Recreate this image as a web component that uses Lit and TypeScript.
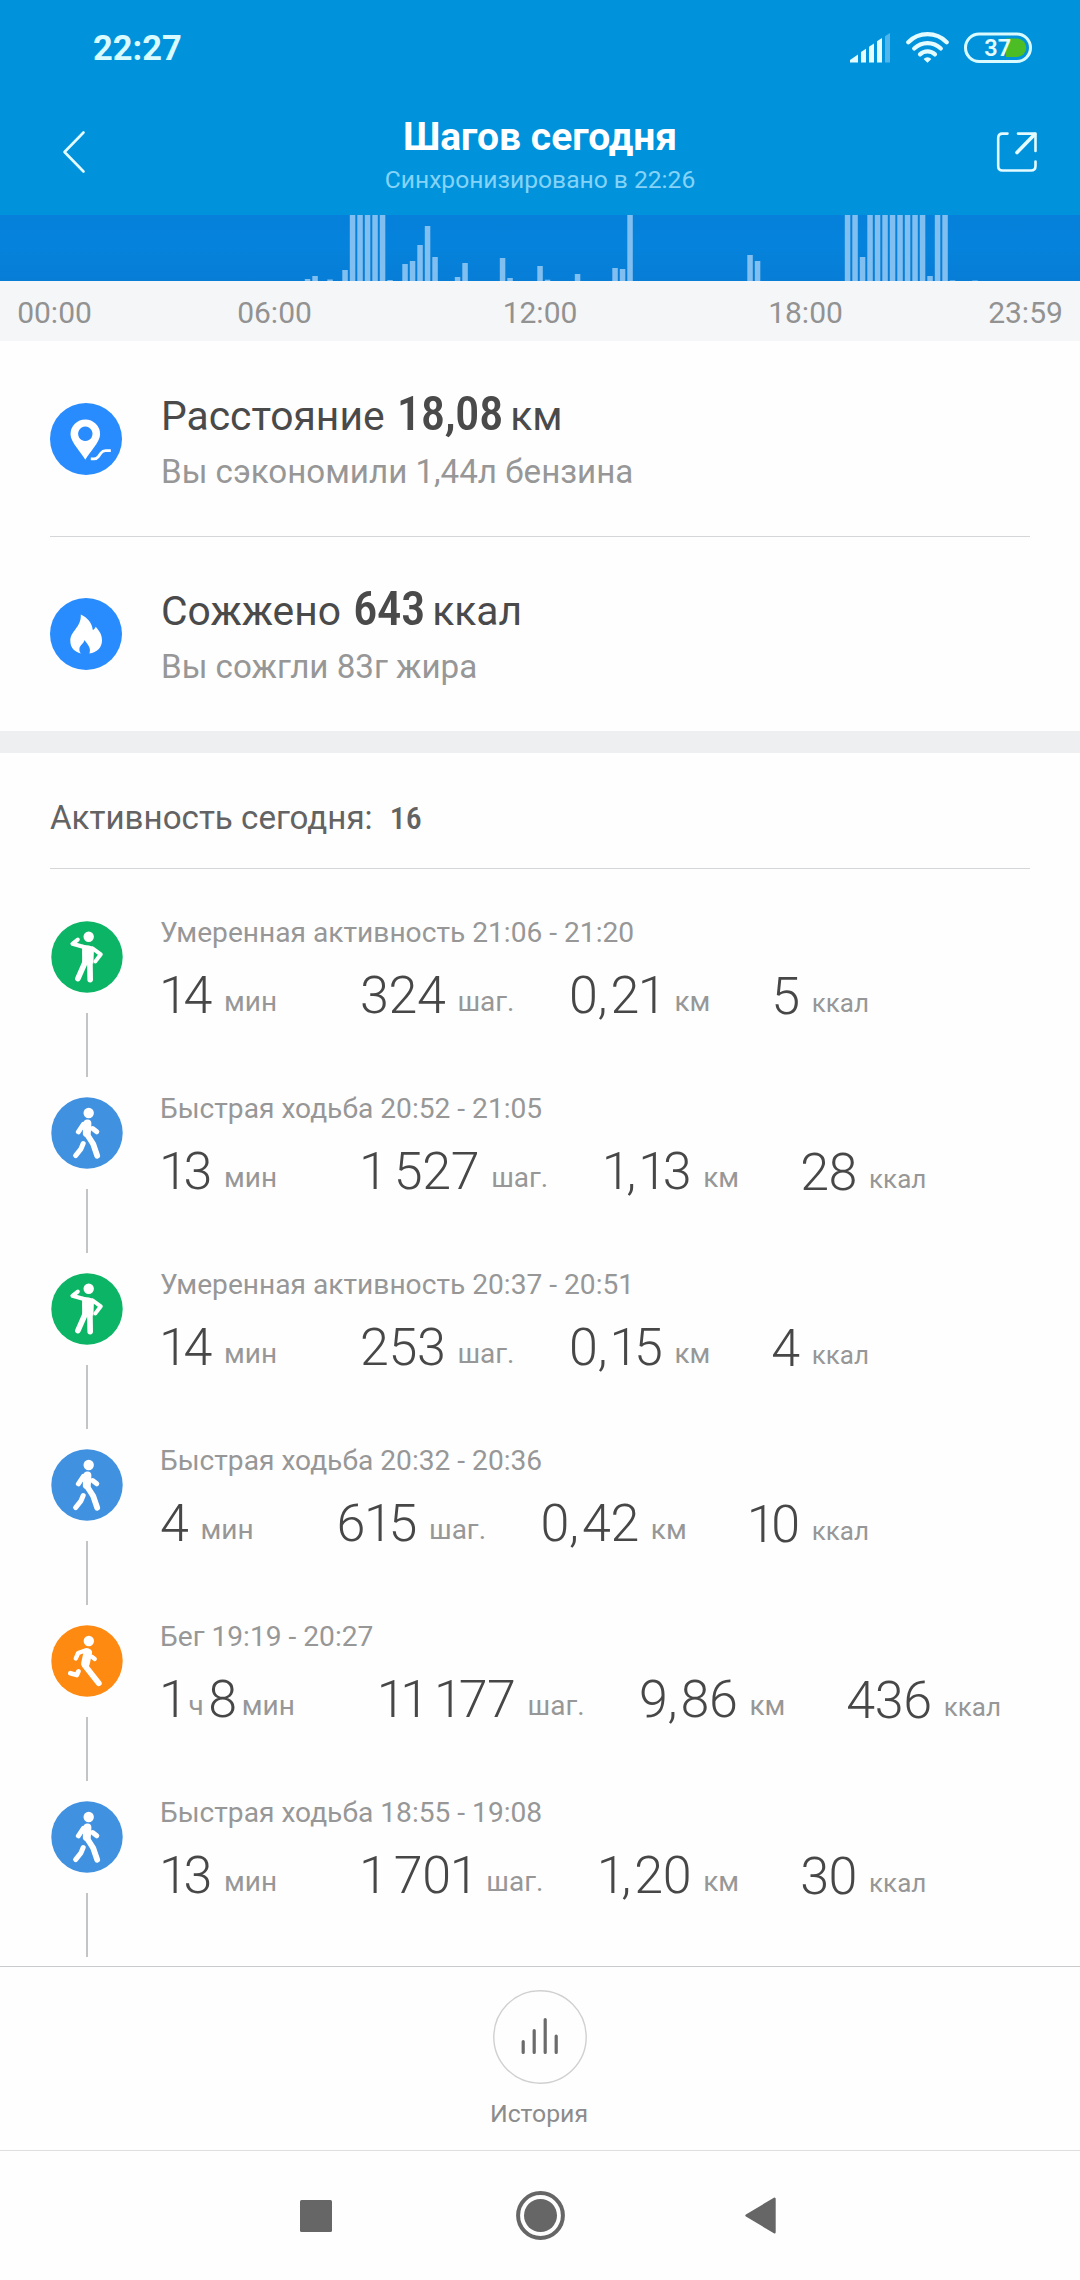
import { LitElement, html, svg, css } from "lit";
import { customElement, property } from "lit/decorators.js";

type Kind = "moderate" | "walk" | "run";
type Part = [value: string, unit: string];

interface Activity {
  kind: Kind;
  label: string;
  metrics: Part[][];
}

const ACTIVITIES: Activity[] = [
  { kind: "moderate", label: "Умеренная активность 21:06 - 21:20", metrics: [[["14", "мин"]], [["324", "шаг."]], [["0,21", "км"]], [["5", "ккал"]]] },
  { kind: "walk", label: "Быстрая ходьба 20:52 - 21:05", metrics: [[["13", "мин"]], [["1 527", "шаг."]], [["1,13", "км"]], [["28", "ккал"]]] },
  { kind: "moderate", label: "Умеренная активность 20:37 - 20:51", metrics: [[["14", "мин"]], [["253", "шаг."]], [["0,15", "км"]], [["4", "ккал"]]] },
  { kind: "walk", label: "Быстрая ходьба 20:32 - 20:36", metrics: [[["4", "мин"]], [["615", "шаг."]], [["0,42", "км"]], [["10", "ккал"]]] },
  { kind: "run", label: "Бег 19:19 - 20:27", metrics: [[["1", "ч"], ["8", "мин"]], [["11 177", "шаг."]], [["9,86", "км"]], [["436", "ккал"]]] },
  { kind: "walk", label: "Быстрая ходьба 18:55 - 19:08", metrics: [[["13", "мин"]], [["1 701", "шаг."]], [["1,20", "км"]], [["30", "ккал"]]] },
];

// Ten-minute slots of the day: slot index -> visible bar height in px.
const BARS: Record<number, number> = {
  40: 2, 41: 5, 43: 1.5, 45: 11, 46: 66, 47: 66, 48: 66, 49: 66, 50: 66, 51: 1,
  53: 17, 54: 20, 55: 36, 56: 55, 57: 24, 60: 4, 61: 18, 66: 23, 67: 3, 71: 15, 72: 1.3,
  76: 7, 81: 13, 82: 12, 83: 66, 99: 26, 100: 20, 112: 66, 113: 66, 114: 24,
  115: 66, 116: 66, 117: 66, 118: 66, 119: 66, 120: 66, 121: 66, 122: 66,
  123: 5, 124: 66, 125: 66, 126: 0.6, 129: 0.5,
};

const COLORS: Record<Kind, string> = { moderate: "#0bb565", walk: "#4191e1", run: "#ff8a12" };

const FIGURES = {
  moderate: svg`
    <circle cx="37.7" cy="15.8" r="5.2" fill="#fff"/>
    <path d="M31 23.8 L38 24.4 Q41.5 25 43 27 L42.4 42.5 L31.2 43.5 Z" fill="#fff"/>
    <path d="M26.8 18.6 L21.4 22.8 L33 26" stroke-width="4"/>
    <path d="M41.5 27.4 L49.8 33.3 L44.4 40.4" stroke-width="4"/>
    <path d="M34.2 41 L26.9 57.6 M38.9 41 L39.2 58.6" stroke-width="5.6"/>`,
  walk: svg`
    <circle cx="37.7" cy="16" r="5.2" fill="#fff"/>
    <path d="M36.6 26.4 L35.8 37 L42.2 47 L46.2 58.8" stroke-width="5.8"/>
    <path d="M36.4 26.6 L35.8 36" stroke-width="8"/>
    <path d="M32.4 27.4 L27.4 34.8" stroke-width="5"/>
    <path d="M41.6 31.6 L45.8 34.8" stroke-width="5"/>
    <path d="M32.2 46.6 L29.8 52.2 L24.6 58.6" stroke-width="5"/>`,
  run: svg`
    <circle cx="37.8" cy="16" r="5.2" fill="#fff"/>
    <path d="M36.8 27.6 L34.4 38.6" stroke-width="8.6"/>
    <path d="M35 25.2 L27.2 28 L24.8 33.4" stroke-width="4.4"/>
    <path d="M40.8 31.6 L43.8 34" stroke-width="4.2"/>
    <path d="M34.2 41 L47.8 58.2" stroke-width="5.8"/>
    <path d="M27.4 46.4 L25.8 50 L19.4 48.2" stroke-width="4.8"/>`,
};

@customElement("activity-item")
class ActivityItem extends LitElement {
  @property({ attribute: false }) item!: Activity;

  static styles = css`
    :host { display: flex; height: 176px; }
    .rail { width: 72px; margin-right: 37px; display: flex; flex-direction: column; align-items: center; gap: 20px; }
    .rail svg { display: block; width: 72px; height: 72px; }
    .line { width: 2px; height: 64px; background: #c3c4c6; }
    .label { margin-top: -4px; font-size: 28.15px; line-height: 32px; color: #979797; }
    .metrics { display: flex; align-items: flex-start; margin-top: 21px; line-height: 60px; }
    .metric { white-space: pre; }
    .metric:nth-child(2) { margin-left: 83px; }
    .metric:nth-child(3) { margin-left: 54.5px; }
    .metric:nth-child(4) { margin-left: 61px; padding-top: 1px; }
    .num { font-size: 52px; font-weight: 340; letter-spacing: -0.4px; line-height: 1; color: #474747; }
    .one { margin-left: -1px; letter-spacing: -4.3px; }
    .comma { letter-spacing: 3px; }
    .gap { letter-spacing: -2.5px; }
    .unit { margin-left: 12px; font-size: 28px; line-height: 1; color: #979797; vertical-align: 2px; }
    .metric:nth-child(4) .unit { font-size: 26px; }
    .multi .unit { margin-left: 5px; }
    .multi .unit + .num { margin-left: 4.5px; }
  `;

  private digits(value: string) {
    const narrow: Record<string, string> = { "1": "one", ",": "comma", " ": "gap" };
    return [...value].map((c) => (narrow[c] ? html`<span class=${narrow[c]}>${c}</span>` : c));
  }

  render() {
    const { kind, label, metrics } = this.item;
    return html`
      <div class="rail">
        <svg viewBox="0 0 72 72" fill="none" stroke-linecap="round" stroke-linejoin="round">
          <circle cx="36" cy="36" r="35.7" fill=${COLORS[kind]}/>
          <g stroke="#fff" stroke-width="0">${FIGURES[kind]}</g>
        </svg>
        <div class="line"></div>
      </div>
      <div>
        <div class="label">${label}</div>
        <div class="metrics">
          ${metrics.map((parts) => html`<div class="metric ${parts.length > 1 ? "multi" : ""}">${parts.map(
            ([value, unit]) => html`<span class="num">${this.digits(value)}</span><span class="unit">${unit}</span>`)}</div>`)}
        </div>
      </div>`;
  }
}

@customElement("app-root")
class AppRoot extends LitElement {
  static styles = css`
    :host { display: block; width: 1080px; height: 2280px; overflow: hidden; background: #fefefe; font-family: Roboto, "Noto Sans", sans-serif; }
    svg { display: block; }
    .header { height: 215px; background: #0093db; color: #fff; }
    .status { height: 95px; display: flex; align-items: center; padding: 0 48px 0 93px; box-sizing: border-box; }
    .time { flex: 1; font-size: 34.5px; font-weight: 700; color: #d9fbff; }
    .signal { margin-right: 15px; }
    .wifi { margin-right: 15px; }
    .battery { font-size: 23.5px; font-weight: 600; }
    .nav { display: grid; grid-template-columns: 1fr auto 1fr; padding: 0 42px 0 42px; }
    .back { margin: 35px 0 0 20px; }
    .share { margin-top: 35px; justify-self: end; }
    .titles { padding-top: 18px; text-align: center; }
    .title { font-size: 39px; font-weight: 700; line-height: 48px; white-space: nowrap; }
    .sync { margin-top: 4px; font-size: 24.6px; line-height: 30px; color: #85d3f8; white-space: nowrap; }
    .chart { height: 66px; background: linear-gradient(#0680da, #0583dc 45%, #077dd6); }
    .axis { height: 60px; box-sizing: border-box; padding-top: 2px; display: grid; grid-template-columns: 109px 331px 200px 331px 109px; align-items: center; justify-items: center; background: #f5f6f8; color: #929292; font-size: 30px; }
    .info { display: flex; align-items: center; height: 195px; margin: 0 50px; border-bottom: 1px solid #d4d6d8; }
    .info.last { height: 194px; border: 0; }
    .info svg { width: 72px; height: 72px; margin-right: 39px; }
    .text { padding-top: 2px; }
    .main { font-size: 40.8px; line-height: 56px; color: #4a4a4a; white-space: nowrap; }
    .big { display: inline-block; margin: 0 -3px 0 2px; font-size: 49px; line-height: 1; font-weight: 500; font-stretch: 75%; letter-spacing: -0.5px; }
    .sub { margin-top: 8px; font-size: 33.15px; line-height: 40px; color: #979797; }
    .band { height: 22px; background: #edeff0; }
    .section { margin: 0 50px; padding: 45px 0 30px; display: flex; gap: 17px; font-size: 33.15px; line-height: 40px; color: #636363; border-bottom: 1px solid #d4d6d8; }
    .count { font-size: 32px; font-weight: 500; font-stretch: 84%; }
    .list { height: 1097px; box-sizing: border-box; padding: 52px 0 0 51px; overflow: hidden; }
    .footer { height: 184px; box-sizing: border-box; padding-top: 23px; border-top: 1px solid #c9cacb; display: flex; flex-direction: column; align-items: center; }
    .history { margin: 15px 2px 0 0; font-size: 24.8px; line-height: 30px; color: #8c8c8c; }
    .system { height: 130px; box-sizing: border-box; border-top: 1px solid #dfdfdf; padding-left: 300px; display: flex; align-items: center; }
    .home { margin: 0 180px 0 184px; }
  `;

  render() {
    return html`
      <div class="header">
        <div class="status">
          <div class="time">22:27</div>
          <svg class="signal" width="41" height="30" viewBox="0 0 41 30" fill="#e4fbff">
            <path d="M0 29.5 V27 L8 21.5 V29.5 Z"/>
            <path d="M11 29.5 V19 L16 15.8 V29.5 Z"/>
            <path d="M19 29.5 V13.7 L24 10.5 V29.5 Z"/>
            <path d="M27 29.5 V8.3 L32 5 V29.5 Z"/>
            <path d="M35 29.5 V3.2 L40 0 V29.5 Z" fill="#4fb5ea"/>
          </svg>
          <svg class="wifi" width="43" height="31" viewBox="0 0 43 31" fill="none" stroke="#e4fbff" stroke-width="4.2" stroke-linecap="round">
            <path d="M2.3 10.2 A27 27 0 0 1 40.7 10.2"/>
            <path d="M8.2 16.6 A19 19 0 0 1 34.8 16.6"/>
            <path d="M14 22.4 A11 11 0 0 1 29 22.4"/>
            <path d="M21.5 30.8 L17.6 27 A5.2 5.2 0 0 1 25.4 27 Z" fill="#e4fbff" stroke="none"/>
          </svg>
          <svg class="battery" width="68" height="31" viewBox="0 0 68 31">
            <rect x="1.5" y="2" width="65" height="27.5" rx="13.7" fill="none" stroke="#d9fbff" stroke-width="3"/>
            <path d="M42 6.5 H53 A9.2 9.2 0 0 1 53 25 H42 Z" fill="#4dbd26"/>
            <text x="33.8" y="24.2" text-anchor="middle" fill="#e4fbff">37</text>
          </svg>
        </div>
        <div class="nav">
          <svg class="back" width="40" height="44" viewBox="0 0 40 44" fill="none" stroke="#e4fbff" stroke-width="2.6" stroke-linecap="round" stroke-linejoin="round"><path d="M21.5 2.5 L2.5 22 L21.5 41.5"/></svg>
          <div class="titles">
            <div class="title">Шагов сегодня</div>
            <div class="sync">Синхронизировано в 22:26</div>
          </div>
          <svg class="share" width="42" height="44" viewBox="0 0 42 44" fill="none" stroke="#e4fbff" stroke-width="2.6" stroke-linecap="round" stroke-linejoin="round">
            <path d="M11.5 3.6 H6.5 Q2.2 3.6 2.2 8 V36 Q2.2 40.5 6.5 40.5 H35 Q39.5 40.5 39.5 36 V31.5"/>
            <path d="M22 3.6 H39.5 V21"/>
            <path d="M38.5 4.5 L21 22.5" stroke-width="3.6"/>
          </svg>
        </div>
      </div>
      <svg class="chart" width="1080" height="66" viewBox="0 0 1080 66" fill="#80bff0">
        ${Object.entries(BARS).map(([slot, h]) => svg`<rect x=${4.8 + 7.5 * Number(slot)} y=${66 - h} width="5.5" height=${h}/>`)}
      </svg>
      <div class="axis"><span>00:00</span><span>06:00</span><span>12:00</span><span>18:00</span><span>23:59</span></div>

      <div class="info">
        <svg viewBox="0 0 72 72">
          <circle cx="36" cy="36" r="36" fill="#288cfe"/>
          <path d="M35.3 56.8 C32 50 20.5 39.5 20.5 31.2 A14.8 14.8 0 0 1 50.1 31.2 C50.1 39.5 38.6 50 35.3 56.8 Z M35.3 23.6 a7.2 7.2 0 1 0 .01 0 Z" fill="#fff" fill-rule="evenodd"/>
          <path d="M40.8 55.8 H44 Q46.8 55.8 48.4 53.6 L51 50 Q52.8 47.6 55.6 47.6 H60.8" fill="none" stroke="#fff" stroke-width="2.8"/>
        </svg>
        <div class="text">
          <div class="main">Расстояние <span class="big">18,08</span> км</div>
          <div class="sub">Вы сэкономили 1,44л бензина</div>
        </div>
      </div>
      <div class="info last">
        <svg viewBox="0 0 72 72">
          <circle cx="36" cy="36" r="36" fill="#288cfe"/>
          <path d="M30.8 16.6 C37 19.5 42 24.5 42.8 32 C44.2 31.6 45.2 30.4 45.6 28.8 C49.5 33 52 37 52 42.5 C52 49.5 47 54.5 39.4 55.6 C41.2 50.5 38.5 47 34.2 42 C34.5 45.5 29.5 47 29.4 51 C29.3 53 30 54.5 31 55.6 C24.5 54 20.3 49.5 20.3 43 C20.3 33 31.5 29.5 30.8 16.6 Z" fill="#fff"/>
        </svg>
        <div class="text">
          <div class="main">Сожжено <span class="big">643</span> ккал</div>
          <div class="sub">Вы сожгли 83г жира</div>
        </div>
      </div>
      <div class="band"></div>
      <div class="section"><span>Активность сегодня:</span><span class="count">16</span></div>
      <div class="list">${ACTIVITIES.map((item) => html`<activity-item .item=${item}></activity-item>`)}</div>

      <div class="footer">
        <svg width="94" height="94" viewBox="0 0 94 94" fill="none">
          <circle cx="47" cy="47" r="46.2" stroke="#d0d0d0" stroke-width="1.4"/>
          <path d="M30.2 51.5 V62.5 M41.2 40.5 V62.5 M52.2 29.5 V62.5 M63.2 46 V62.5" stroke="#6b6b6b" stroke-width="3.2" stroke-linecap="round"/>
        </svg>
        <div class="history">История</div>
      </div>
      <div class="system">
        <svg width="32" height="32" viewBox="0 0 32 32"><rect width="32" height="32" rx="1.5" fill="#666"/></svg>
        <svg class="home" width="49" height="49" viewBox="0 0 49 49"><circle cx="24.5" cy="24.5" r="22.4" fill="none" stroke="#666" stroke-width="4"/><circle cx="24.5" cy="24.5" r="16.5" fill="#666"/></svg>
        <svg width="31" height="37" viewBox="0 0 31 37"><path d="M1.5 18.5 L29.5 1.8 V35.2 Z" fill="#666" stroke="#666" stroke-width="2.4" stroke-linejoin="round"/></svg>
      </div>`;
  }
}
